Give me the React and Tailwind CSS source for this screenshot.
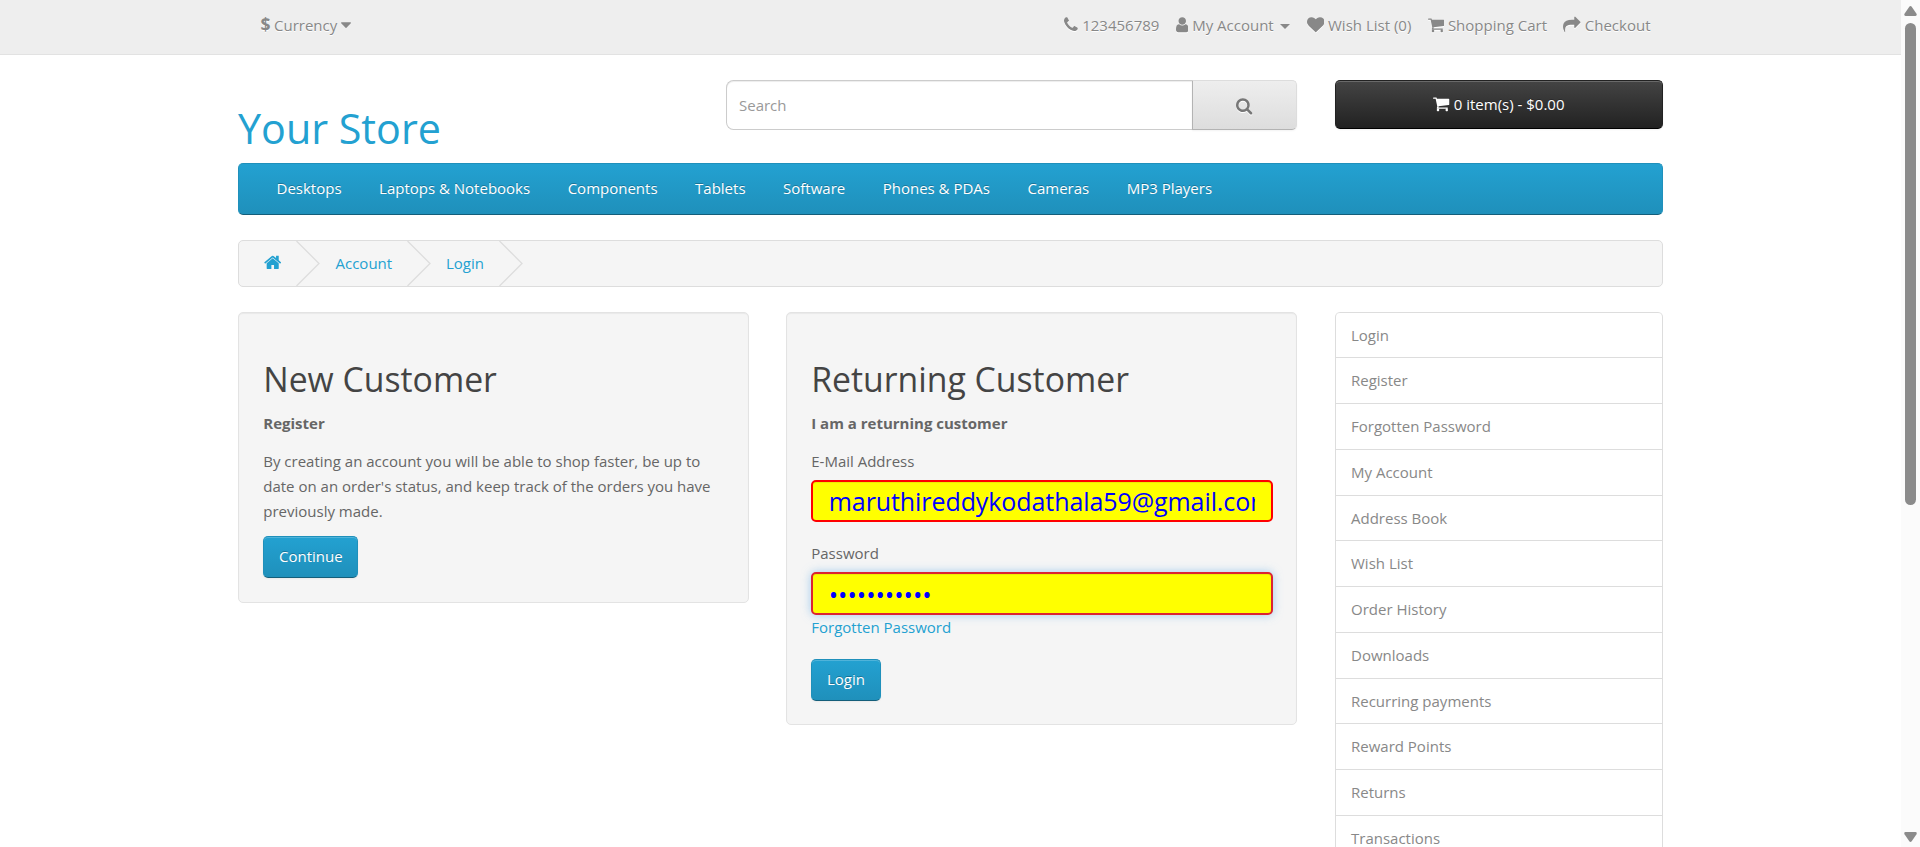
import React from "react";

const ICONS = {
  phone: ["192 0 1408 1792", "M1600 1240q0 27-10 70.5t-21 68.5q-21 50-122 106-94 51-186 51-27 0-53-3.5t-57.5-12.5-47-14.5-55.5-20.5-49-18q-98-35-175-83-127-79-264-216t-216-264q-48-77-83-175-3-9-18-49t-20.5-55.5-14.5-47-12.5-57.5-3.5-53q0-92 51-186 56-101 106-122 25-11 68.5-21t70.5-10q14 0 21 3 18 6 53 76 11 19 30 54t35 63.5 31 53.5q3 4 17.5 25t21.5 35.5 7 28.5q0 20-28.5 50t-62 55-62 53-28.5 46q0 9 5 22.5t8.5 20.5 14 24 11.5 19q76 137 174 235t235 174q2 1 19 11.5t24 14 20.5 8.5 22.5 5q18 0 46-28.5t53-62 55-62 50-28.5q14 0 28.5 7t35.5 21.5 25 17.5q25 15 53.5 31t63.5 35 54 30q70 35 76 53 3 7 3 21z"],
  user: ["256 0 1280 1792", "M1536 1399q0 109-62.5 187t-150.5 78h-854q-88 0-150.5-78t-62.5-187q0-85 8.5-160.5t31.5-152 58.5-131 94-89 134.5-34.5q131 128 313 128t313-128q76 0 134.5 34.5t94 89 58.5 131 31.5 152 8.5 160.5zm-256-887q0 159-112.5 271.5t-271.5 112.5-271.5-112.5-112.5-271.5 112.5-271.5 271.5-112.5 271.5 112.5 112.5 271.5z"],
  heart: ["0 0 1792 1792", "M896 1664q-26 0-44-18l-624-602q-10-8-27.5-26t-55.5-65.5-68-97.5-53.5-121-23.5-138q0-220 127-344t351-124q62 0 126.5 21.5t120 58 95.5 68.5 76 68q36-36 76-68t95.5-68.5 120-58 126.5-21.5q224 0 351 124t127 344q0 221-229 450l-623 600q-18 18-44 18z"],
  cart: ["64 0 1664 1792", "M704 1536q0 52-38 90t-90 38-90-38-38-90 38-90 90-38 90 38 38 90zm896 0q0 52-38 90t-90 38-90-38-38-90 38-90 90-38 90 38 38 90zm128-1088v512q0 24-16.5 42.5t-40.5 21.5l-1044 122q13 60 13 70 0 16-24 64h920q26 0 45 19t19 45-19 45-45 19h-1024q-26 0-45-19t-19-45q0-11 8-31.5t16-36 21.5-40 15.5-29.5l-177-823h-204q-26 0-45-19t-19-45 19-45 45-19h256q16 0 28.5 6.5t19.5 15.5 13 24.5 8 26 5.5 29.5 4.5 26h1201q26 0 45 19t19 45z"],
  share: ["0 0 1792 1792", "M1792 640q0 26-19 45l-512 512q-19 19-45 19t-45-19-19-45v-256h-224q-98 0-175.5 6t-154 21.5-133 42.5-105.5 69.5-80 101-48.5 138.5-17.5 181q0 55 5 123 0 6 2.5 23.5t2.5 26.5q0 15-8.5 25t-23.5 10q-16 0-28-17-7-9-13-22t-13.5-30-10.5-24q-127-285-127-451 0-199 53-333 162-403 875-403h224v-256q0-26 19-45t45-19 45 19l512 512q19 19 19 45z"],
  search: ["64 0 1664 1792", "M1216 832q0-185-131.5-316.5t-316.5-131.5-316.5 131.5-131.5 316.5 131.5 316.5 316.5 131.5 316.5-131.5 131.5-316.5zm512 832q0 52-38 90t-90 38q-54 0-90-38l-343-342q-179 124-399 124-143 0-273.5-55.5t-225-150-150-225-55.5-273.5 55.5-273.5 150-225 225-150 273.5-55.5 273.5 55.5 225 150 150 225 55.5 273.5q0 220-124 399l343 343q37 37 37 90z"],
  home: ["64 0 1664 1792", "M1472 992v480q0 26-19 45t-45 19h-384v-384h-256v384h-384q-26 0-45-19t-19-45v-480q0-1 .5-3t.5-3l575-474 575 474q1 2 1 6zm223-69l-62 74q-8 9-21 11h-3q-13 0-21-7l-692-577-692 577q-12 8-24 7-13-2-21-11l-62-74q-8-10-7-23.5t11-21.5l719-599q32-26 76-26t76 26l244 204v-195q0-14 9-23t23-9h192q14 0 23 9t9 23v408l219 182q10 8 11 21.5t-7 23.5z"],
  caret: ["384 0 1024 1792", "M1408 704q0 26-19 45l-448 448q-19 19-45 19t-45-19l-448-448q-19-19-19-45t19-45 45-19h896q26 0 45 19t19 45z"],
};

function Icon({ name, className = "h-[17.5px]" }) {
  const [box, d] = ICONS[name];
  return (
    <svg viewBox={box} className={`${className} w-auto shrink-0 fill-current`} aria-hidden="true">
      <path d={d} />
    </svg>
  );
}

function TopLink({ icon, children }) {
  return (
    <a className="flex items-start gap-[4px]">
      <Icon name={icon} className="mt-[3px] h-[17.5px] drop-shadow-[0_1px_0_#fff]" />
      <span className="whitespace-nowrap">{children}</span>
    </a>
  );
}

function TopBar() {
  return (
    <nav className="h-[55px] border-b border-[#e2e2e2] bg-[#eee] text-[#888] [text-shadow:0_1px_0_#fff]">
      <div className="mx-auto flex w-[1425px] items-start justify-between pt-[13px] pr-[12.5px] pl-[22.5px] leading-[25px]">
        <div className="flex items-start">
          <strong className="-mt-px text-[17.5px] font-bold">$</strong>
          <span className="ml-[3.5px]">Currency</span>
          <Icon name="caret" className="mt-[3px] ml-[4px] h-[17.5px]" />
        </div>
        <div className="flex items-start gap-[16.3px]">
          <TopLink icon="phone">123456789</TopLink>
          <div className="flex items-start gap-[6.5px]">
            <TopLink icon="user">My Account</TopLink>
            <span className="mt-[11px] border-x-[5px] border-t-[5px] border-x-transparent border-t-[#888]" />
          </div>
          <TopLink icon="heart">Wish List (0)</TopLink>
          <TopLink icon="cart">Shopping Cart</TopLink>
          <TopLink icon="share">Checkout</TopLink>
        </div>
      </div>
    </nav>
  );
}

function Header() {
  return (
    <header className="mt-[25px] flex h-[83px] items-start">
      <h1 className="mt-[18px] w-[488px] text-[41.25px] leading-[60px] text-[#23a1d1]">Your Store</h1>
      <div className="flex h-[50px] w-[571px]">
        <input
          placeholder="Search"
          className="h-[50px] w-[466px] rounded-l-[7.5px] border border-r-0 border-[#ccc] bg-white px-[12px] text-[15px] shadow-[inset_0_1px_1px_rgba(0,0,0,0.075)] outline-none placeholder:text-[#999]"
        />
        <button className="flex flex-1 justify-center rounded-r-[5px] border border-t-[#ddd] border-r-[#ddd] border-b-[#b3b3b3] border-l-[#b3b3b3] bg-linear-to-b from-[#eee] to-[#ddd] pt-[16px] text-[#777] shadow-[0_1px_2px_rgba(0,0,0,0.05)]">
          <Icon name="search" className="h-[17.5px] drop-shadow-[0_1px_0_#fff]" />
        </button>
      </div>
      <button className="ml-[38px] flex h-[49px] flex-1 justify-center gap-[4px] rounded-[5px] border border-t-[#222] border-r-[#222] border-b-black border-l-[#222] bg-linear-to-b from-[#444] to-[#222] pt-[11px] leading-[25px] text-white shadow-[inset_0_1px_0_rgba(255,255,255,0.2),0_1px_2px_rgba(0,0,0,0.05)] [text-shadow:0_-1px_0_rgba(0,0,0,0.25)]">
        <Icon name="cart" className="mt-[3px] h-[17.5px]" />
        <span>0 item(s) - $0.00</span>
      </button>
    </header>
  );
}

const CATEGORIES = ["Desktops", "Laptops & Notebooks", "Components", "Tablets", "Software", "Phones & PDAs", "Cameras", "MP3 Players"];

function Menu() {
  return (
    <nav className="flex h-[52px] gap-[37.5px] rounded-[5px] border border-t-[#1f90bb] border-r-[#1f90bb] border-b-[#145e7a] border-l-[#1f90bb] bg-linear-to-b from-[#23a1d1] to-[#1f90bb] pt-[12px] pl-[37.5px] leading-[25px] text-white [text-shadow:0_-1px_0_rgba(0,0,0,0.25)]">
      {CATEGORIES.map((c) => (
        <a key={c} className="whitespace-nowrap">{c}</a>
      ))}
    </nav>
  );
}

function Chevron() {
  return (
    <svg viewBox="0 0 24 45" className="h-[45px] w-[24px] shrink-0" aria-hidden="true">
      <path d="M0.5 0L23 22.5L0.5 45" fill="none" stroke="#ddd" strokeWidth="1.25" />
    </svg>
  );
}

function Breadcrumb() {
  return (
    <ul className="mt-[25px] flex h-[47px] rounded-[5px] border border-[#ddd] bg-[#f5f5f5] leading-[25px] text-[#23a1d1]">
      <li className="flex">
        <a className="w-[56.5px] pt-[12px] pl-[25px]"><Icon name="home" className="h-[18.75px]" /></a>
        <Chevron />
      </li>
      <li className="flex">
        <a className="w-[87.5px] pt-[10px] pl-[16px]">Account</a>
        <Chevron />
      </li>
      <li className="flex">
        <a className="w-[68px] pt-[10px] pl-[15px]">Login</a>
        <Chevron />
      </li>
    </ul>
  );
}

function PrimaryButton({ children }) {
  return (
    <button className="block h-[42px] rounded-[5px] border border-t-[#1f90bb] border-r-[#1f90bb] border-b-[#145e7a] border-l-[#1f90bb] bg-linear-to-b from-[#23a1d1] to-[#1f90bb] px-[14.75px] pb-[2px] leading-[25px] text-white shadow-[inset_0_1px_0_rgba(255,255,255,0.2),0_1px_2px_rgba(0,0,0,0.05)] [text-shadow:0_-1px_0_rgba(0,0,0,0.25)]">
      {children}
    </button>
  );
}

function Well({ title, className, children }) {
  return (
    <section className={`${className} w-[511px] shrink-0 rounded-[5px] border border-[#e3e3e3] bg-[#f5f5f5] px-[24.25px] pt-[46px] shadow-[inset_0_1px_1px_rgba(0,0,0,0.05)]`}>
      <h2 className="text-[33.75px] leading-[40px] text-[#444]">{title}</h2>
      {children}
    </section>
  );
}

const ACCOUNT_LINKS = ["Login", "Register", "Forgotten Password", "My Account", "Address Book", "Wish List", "Order History", "Downloads", "Recurring payments", "Reward Points", "Returns", "Transactions"];

function Content() {
  return (
    <main className="mt-[25px] flex items-start">
      <Well title="New Customer" className="h-[291px]">
        <p className="mt-[12px]"><strong className="font-bold">Register</strong></p>
        <p className="mt-[13px] w-[461px]">
          By creating an account you will be able to shop faster, be up to date on an order's status, and keep track of the orders you have previously made.
        </p>
        <div className="mt-[12px]"><PrimaryButton>Continue</PrimaryButton></div>
      </Well>
      <Well title="Returning Customer" className="ml-[37px] h-[413px]">
        <p className="mt-[12px]"><strong className="font-bold">I am a returning customer</strong></p>
        <label className="mt-[13px] block">E-Mail Address</label>
        <div className="mt-[6px] h-[42px] w-[462px] rounded-[5px] border-2 border-[red] bg-[yellow] pr-[16.5px] pl-[15.5px] text-[25px] leading-[37px] tracking-[-0.08px] text-[blue] shadow-[inset_0_1px_1px_rgba(0,0,0,0.075)]">
          <div className="overflow-hidden pt-px whitespace-nowrap">maruthireddykodathala59@gmail.com</div>
        </div>
        <label className="mt-[19px] block">Password</label>
        <div className="mt-[6px] h-[43px] w-[462px] rounded-[5px] border-2 border-[#dc2430] bg-[yellow] pt-px pl-[15.5px] text-[25px] leading-[38px] tracking-[-0.05px] text-[blue] shadow-[inset_0_1px_1px_rgba(0,0,0,0.075),0_0_10px_rgba(102,175,233,0.6)]">
          •••••••••••
        </div>
        <a className="block text-[#23a1d1]">Forgotten Password</a>
        <div className="mt-[19px]"><PrimaryButton>Login</PrimaryButton></div>
      </Well>
      <aside className="-mt-[0.5px] ml-[38px] flex flex-1 flex-col overflow-hidden rounded-t-[5px] border-x border-[#ddd] text-[#888]">
        {ACCOUNT_LINKS.map((l) => (
          <a key={l} className="h-[45.75px] shrink-0 border-t border-[#ddd] px-[15px] pt-[10px] first:rounded-t-[4px]">{l}</a>
        ))}
      </aside>
    </main>
  );
}

function Scrollbar() {
  return (
    <div className="flex w-[19px] shrink-0 flex-col items-center bg-[#fbfbfb]">
      <svg viewBox="0 0 13 10" className="mt-[6px] h-[10px] w-[13px] shrink-0 fill-[#8b8b8b]">
        <path d="M5.3 .7Q6.5-.6 7.7 .7L12.5 7.8Q13.3 9.8 11.5 10H1.5Q-.3 9.8 .5 7.8Z" />
      </svg>
      <div className="mt-[7px] h-[482px] w-[11px] shrink-0 rounded-full bg-[#8b8b8b]" />
      <svg viewBox="0 0 13 10" className="mt-auto mb-[5px] h-[10px] w-[13px] shrink-0 fill-[#8b8b8b]">
        <path d="M5.3 9.3Q6.5 10.6 7.7 9.3L12.5 2.2Q13.3 .2 11.5 0H1.5Q-.3 .2 .5 2.2Z" />
      </svg>
    </div>
  );
}

export default function App() {
  return (
    <div className="flex h-[847px] w-[1920px] overflow-hidden bg-white font-['Open_Sans','Noto_Sans',sans-serif] text-[15px] leading-[25px] font-normal text-[#666]">
      <div className="min-w-0 flex-1 overflow-hidden">
        <TopBar />
        <div className="mx-auto w-[1425px]">
          <Header />
          <Menu />
          <Breadcrumb />
          <Content />
        </div>
      </div>
      <Scrollbar />
    </div>
  );
}
